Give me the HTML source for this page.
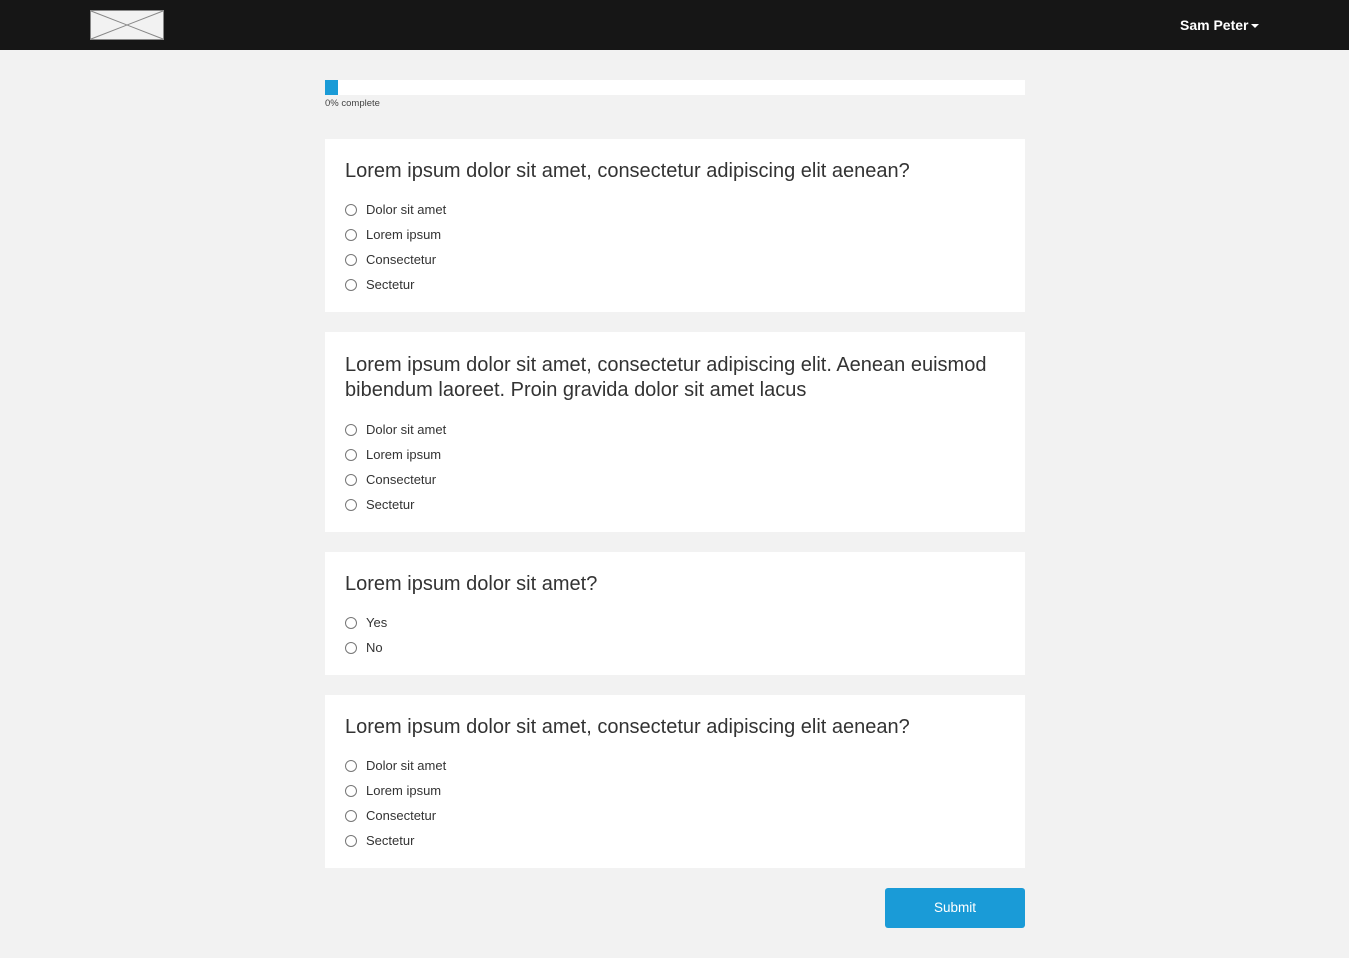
<!DOCTYPE html>
<html><head><style>
*{margin:0;padding:0;box-sizing:border-box}
body{width:1349px;height:958px;background:#f2f2f2;font-family:"Liberation Sans",Arial,sans-serif;color:#333;position:relative;overflow:hidden}
.nav{height:50px;background:#161616;position:relative}
.logo{position:absolute;left:90px;top:10px;width:74px;height:30px}
.user{position:absolute;left:1180px;top:17px;color:#fff;font-weight:bold;font-size:14px}
.caret{display:inline-block;width:0;height:0;border-left:4px solid transparent;border-right:4px solid transparent;border-top:4px solid #fff;vertical-align:middle;margin-left:3px}
.prog{position:absolute;left:325px;top:80px;width:700px;height:15px;background:#fff}
.prog div{width:13px;height:15px;background:#1a9bd7}
.pt{position:absolute;left:325px;top:98px;font-size:9.5px;color:#444}
.card{position:absolute;left:325px;width:700px;background:#fff;padding:20px 20px 15px}
.q{font-size:20px;line-height:25px;margin-bottom:13px;color:#333}
.o{height:25px;line-height:25px;font-size:13px;position:relative;padding-left:21px}
.o:before{content:"";position:absolute;left:0;top:7px;width:12px;height:12px;border:1px solid #777;border-radius:50%;box-sizing:border-box}
.btn{position:absolute;left:885px;top:888px;width:140px;height:40px;background:#1a9bd7;color:#fff;font-size:13.5px;text-align:center;line-height:39px;border-radius:3px}
</style></head><body>
<div class="nav"><svg class="logo" viewBox="0 0 74 30"><rect x="0.5" y="0.5" width="73" height="29" fill="#f2f2f2" stroke="#888"/><line x1="1" y1="1" x2="73" y2="29" stroke="#888"/><line x1="73" y1="1" x2="1" y2="29" stroke="#888"/></svg>
<div class="user">Sam Peter<span class="caret"></span></div></div>
<div class="prog"><div></div></div>
<div class="pt">0% complete</div>
<div class="card" style="top:139px;height:173px"><div class="q">Lorem ipsum dolor sit amet, consectetur adipiscing elit aenean?</div>
<div class="o">Dolor sit amet</div><div class="o">Lorem ipsum</div><div class="o">Consectetur</div><div class="o">Sectetur</div></div>
<div class="card" style="top:332px;height:200px;padding-top:21px"><div class="q" style="margin-bottom:14px">Lorem ipsum dolor sit amet, consectetur adipiscing elit. Aenean euismod bibendum laoreet. Proin gravida dolor sit amet lacus</div>
<div class="o">Dolor sit amet</div><div class="o">Lorem ipsum</div><div class="o">Consectetur</div><div class="o">Sectetur</div></div>
<div class="card" style="top:552px;height:123px"><div class="q">Lorem ipsum dolor sit amet?</div>
<div class="o">Yes</div><div class="o">No</div></div>
<div class="card" style="top:695px;height:173px"><div class="q">Lorem ipsum dolor sit amet, consectetur adipiscing elit aenean?</div>
<div class="o">Dolor sit amet</div><div class="o">Lorem ipsum</div><div class="o">Consectetur</div><div class="o">Sectetur</div></div>
<div class="btn">Submit</div>
</body></html>
